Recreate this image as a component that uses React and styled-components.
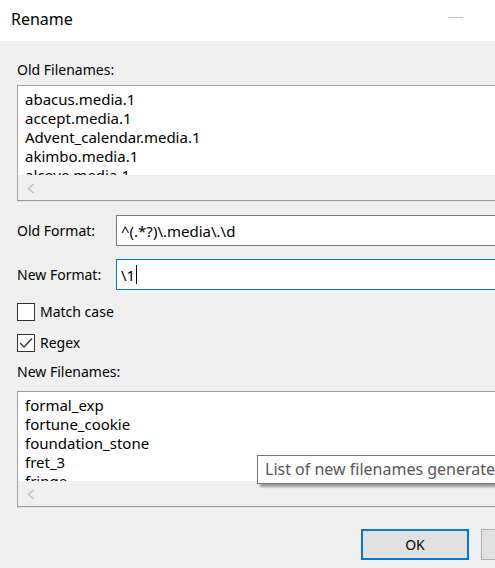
import React from "react";
import styled, { createGlobalStyle } from "styled-components";

const Global = createGlobalStyle`
  html, body { margin: 0; padding: 0; background: #f0f0f0; overflow: hidden; }
  body { font-family: "Segoe UI", "Noto Sans", "Open Sans", sans-serif; color: #000; }
`;

const Window = styled.div`
  width: 600px;
  height: 568px;
  background: #f0f0f0;
  display: flex;
  flex-direction: column;
`;

const TitleBar = styled.div`
  height: 41px;
  background: #fff;
  display: flex;
  align-items: center;
  justify-content: space-between;
  padding-left: 11px;
  box-sizing: border-box;
`;

const Title = styled.span`
  font-size: 16px;
  line-height: 20px;
  margin-top: -4px;
`;

const CaptionButtons = styled.div`
  display: flex;
  height: 100%;
`;

const CaptionButton = styled.div`
  width: 58px;
  height: 100%;
  display: flex;
  align-items: center;
  justify-content: center;
  &::before {
    content: "";
    display: ${(p) => (p.$kind === "min" ? "block" : "none")};
    width: 15px;
    height: 1px;
    background: #c4c4c4;
    margin-top: -7px;
  }
`;

const Body = styled.div`
  display: flex;
  flex-direction: column;
  padding: 0 17px;
`;

const SectionLabel = styled.div`
  font-size: 14px;
  line-height: 20px;
  margin-top: ${(p) => p.$top}px;
  margin-bottom: ${(p) => p.$bottom}px;
`;

const ListWrap = styled.div`
  position: relative;
`;

const ListBox = styled.div`
  height: 116px;
  box-sizing: border-box;
  border: 1px solid #a0a0a0;
  border-bottom-color: #9a9a9a;
  box-shadow: 0 1px 0 #e3e3e3;
  background: #fff;
  display: flex;
  flex-direction: column;
`;

const Items = styled.div`
  flex: 1;
  overflow: hidden;
  padding: 4px 7px 0;
  font-size: 15px;
  line-height: 19px;
`;

const Item = styled.div`
  white-space: nowrap;
`;

const HScroll = styled.div`
  height: 25px;
  background: #f0f0f0;
  display: flex;
  align-items: center;
  padding-left: 9px;
  padding-top: 2px;
  box-sizing: border-box;
  flex-shrink: 0;
`;

const Tooltip = styled.div`
  position: absolute;
  left: 240px;
  top: 64px;
  height: 29px;
  box-sizing: border-box;
  padding: 0 7px;
  border: 1px solid #767676;
  background: #fff;
  color: #575757;
  font-size: 16px;
  line-height: 27px;
  white-space: nowrap;
  box-shadow: 3px 3px 2px rgba(0, 0, 0, 0.35);
`;

const FormRow = styled.div`
  display: flex;
  align-items: center;
  margin-top: ${(p) => p.$top}px;
`;

const RowLabel = styled.div`
  width: 99px;
  font-size: 14px;
  line-height: 20px;
`;

const TextBox = styled.div`
  flex: 1;
  height: 31px;
  box-sizing: border-box;
  border: 1px solid ${(p) => (p.$focused ? "#0078d7" : "#7a7a7a")};
  background: #fff;
  display: flex;
  align-items: center;
  padding-left: 4px;
  font-size: 15px;
`;

const Caret = styled.span`
  display: inline-block;
  width: 1px;
  height: 19px;
  background: #000;
  margin-left: 1px;
`;

const CheckRow = styled.div`
  display: flex;
  align-items: center;
  gap: 5px;
  margin-top: ${(p) => p.$top}px;
  font-size: 14px;
  line-height: 20px;
`;

const Box = styled.div`
  width: 18px;
  height: 18px;
  box-sizing: border-box;
  border: 1px solid #333;
  background: #fff;
  display: flex;
  align-items: center;
  justify-content: center;
`;

const ButtonRow = styled.div`
  display: flex;
  justify-content: flex-end;
  gap: 12px;
  margin-top: 22px;
  padding-right: 11px;
  margin-right: -17px;
`;

const Button = styled.div`
  width: 108px;
  height: 31px;
  box-sizing: border-box;
  border: ${(p) => (p.$default ? "2px solid #0078d7" : "1px solid #adadad")};
  background: #e1e1e1;
  display: flex;
  align-items: center;
  justify-content: center;
  font-size: 14px;
`;

const oldNames = [
  "abacus.media.1",
  "accept.media.1",
  "Advent_calendar.media.1",
  "akimbo.media.1",
  "alcove.media.1",
];
const newNames = ["formal_exp", "fortune_cookie", "foundation_stone", "fret_3", "fringe"];

const LeftArrow = () => (
  <svg width="8" height="11" viewBox="0 0 8 11">
    <polyline points="6.5,1 1.5,5.5 6.5,10" fill="none" stroke="#c2c2c2" strokeWidth="1.6" />
  </svg>
);

const Check = () => (
  <svg width="14" height="12" viewBox="0 0 14 12">
    <polyline points="1,6 5,10 13,1.5" fill="none" stroke="#333" strokeWidth="1.4" />
  </svg>
);

const List = ({ items, children }) => (
  <ListWrap>
    <ListBox>
      <Items>
        {items.map((n) => (
          <Item key={n}>{n}</Item>
        ))}
      </Items>
      <HScroll>
        <LeftArrow />
      </HScroll>
    </ListBox>
    {children}
  </ListWrap>
);

export default function App() {
  return (
    <>
      <Global />
      <Window>
        <TitleBar>
          <Title>Rename</Title>
          <CaptionButtons>
            <CaptionButton $kind="min" />
            <CaptionButton />
            <CaptionButton />
          </CaptionButtons>
        </TitleBar>
        <Body>
          <SectionLabel $top={19} $bottom={5}>Old Filenames:</SectionLabel>
          <List items={oldNames} />
          <FormRow $top={14}>
            <RowLabel>Old Format:</RowLabel>
            <TextBox>^(.*?)\.media\.\d</TextBox>
          </FormRow>
          <FormRow $top={13}>
            <RowLabel>New Format:</RowLabel>
            <TextBox $focused>
              \1
              <Caret />
            </TextBox>
          </FormRow>
          <CheckRow $top={12}>
            <Box />
            Match case
          </CheckRow>
          <CheckRow $top={11}>
            <Box>
              <Check />
            </Box>
            Regex
          </CheckRow>
          <SectionLabel $top={9} $bottom={9}>New Filenames:</SectionLabel>
          <List items={newNames}>
            <Tooltip>List of new filenames generated from the old filenames</Tooltip>
          </List>
          <ButtonRow>
            <Button $default>OK</Button>
            <Button>Cancel</Button>
          </ButtonRow>
        </Body>
      </Window>
    </>
  );
}
